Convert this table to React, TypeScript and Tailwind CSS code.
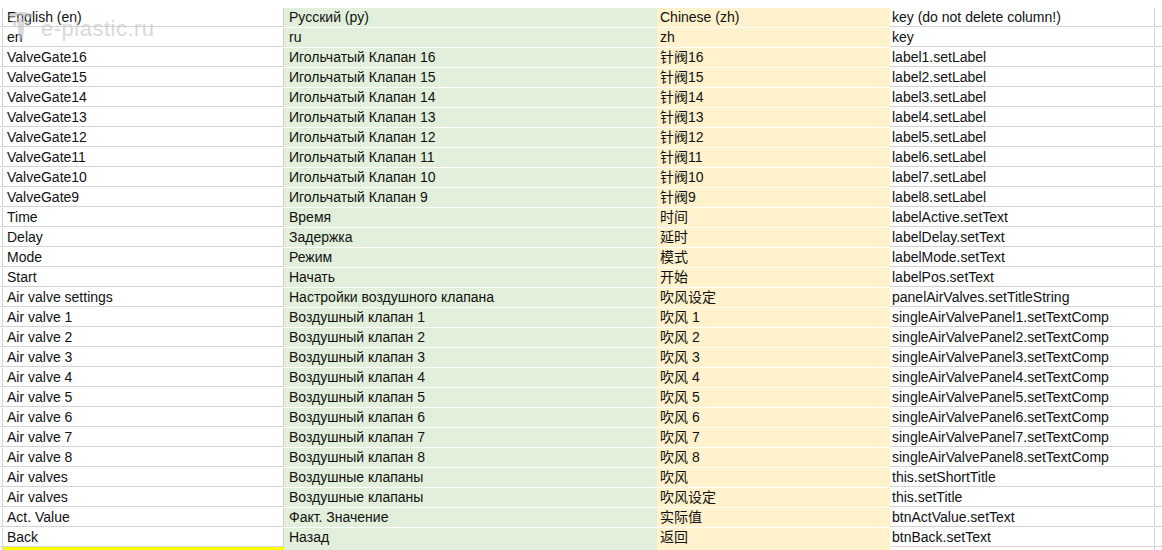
import React from "react";

type Row = [string, string, string, string];

const rows: Row[] = [
  ["en", "ru", "zh", "key"],
  ["ValveGate16", "Игольчатый Клапан 16", "针阀16", "label1.setLabel"],
  ["ValveGate15", "Игольчатый Клапан 15", "针阀15", "label2.setLabel"],
  ["ValveGate14", "Игольчатый Клапан 14", "针阀14", "label3.setLabel"],
  ["ValveGate13", "Игольчатый Клапан 13", "针阀13", "label4.setLabel"],
  ["ValveGate12", "Игольчатый Клапан 12", "针阀12", "label5.setLabel"],
  ["ValveGate11", "Игольчатый Клапан 11", "针阀11", "label6.setLabel"],
  ["ValveGate10", "Игольчатый Клапан 10", "针阀10", "label7.setLabel"],
  ["ValveGate9", "Игольчатый Клапан 9", "针阀9", "label8.setLabel"],
  ["Time", "Время", "时间", "labelActive.setText"],
  ["Delay", "Задержка", "延时", "labelDelay.setText"],
  ["Mode", "Режим", "模式", "labelMode.setText"],
  ["Start", "Начать", "开始", "labelPos.setText"],
  ["Air valve settings", "Настройки воздушного клапана", "吹风设定", "panelAirValves.setTitleString"],
  ["Air valve 1", "Воздушный клапан 1", "吹风 1", "singleAirValvePanel1.setTextComp"],
  ["Air valve 2", "Воздушный клапан 2", "吹风 2", "singleAirValvePanel2.setTextComp"],
  ["Air valve 3", "Воздушный клапан 3", "吹风 3", "singleAirValvePanel3.setTextComp"],
  ["Air valve 4", "Воздушный клапан 4", "吹风 4", "singleAirValvePanel4.setTextComp"],
  ["Air valve 5", "Воздушный клапан 5", "吹风 5", "singleAirValvePanel5.setTextComp"],
  ["Air valve 6", "Воздушный клапан 6", "吹风 6", "singleAirValvePanel6.setTextComp"],
  ["Air valve 7", "Воздушный клапан 7", "吹风 7", "singleAirValvePanel7.setTextComp"],
  ["Air valve 8", "Воздушный клапан 8", "吹风 8", "singleAirValvePanel8.setTextComp"],
  ["Air valves", "Воздушные клапаны", "吹风", "this.setShortTitle"],
  ["Air valves", "Воздушные клапаны", "吹风设定", "this.setTitle"],
  ["Act. Value", "Факт. Значение", "实际值", "btnActValue.setText"],
  ["Back", "Назад", "返回", "btnBack.setText"],
];

const font = {
  fontFamily: '"Liberation Sans", "Noto Sans CJK SC", sans-serif',
};

function SheetRow({ cells, header }: { cells: Row; header?: boolean }) {
  const h = header ? "h-[27px] pt-[8px]" : "h-[20px] pt-[1px]";
  return (
    <div className={`flex ${h} text-[14px] leading-[19px] text-[#111]`}>
      <div className="w-[3px] shrink-0 border-r border-b border-[#d4d4d4]" />
      <div className="w-[281px] shrink-0 border-r border-b border-[#d4d4d4] pl-[4px] truncate">
        {cells[0]}
      </div>
      <div className="w-[373px] shrink-0 bg-[#e2efda] pl-[5px] truncate">{cells[1]}</div>
      <div className="w-[233px] shrink-0 bg-[#fff2cc] pl-[3px] truncate">{cells[2]}</div>
      <div className="w-[265px] shrink-0 border-r border-b border-[#d4d4d4] pl-[2px] truncate">
        {cells[3]}
      </div>
      <div className="flex-1 border-b border-[#d4d4d4]" />
    </div>
  );
}

function Watermark() {
  return (
    <div className="pointer-events-none absolute left-[4px] top-[9px] flex items-end gap-[3px] opacity-60">
      <svg width="34" height="32" viewBox="0 0 34 32" fill="none">
        <path d="M4 6 C10 2 24 2 30 6 L27 9 C22 7 12 7 7 9 Z" fill="#bdbdbd" />
        <path d="M13 9 L21 9 L19 30 L15 30 Z" fill="#c4c4c4" />
        <path d="M8 12 L13 12 L12 17 L9 17 Z" fill="#cccccc" />
        <path d="M21 12 L26 12 L25 17 L22 17 Z" fill="#cccccc" />
      </svg>
      <span
        className="text-[22px] leading-[24px] text-[#c2c2c2] tracking-[0.5px]"
        style={{ fontFamily: '"Liberation Sans", sans-serif' }}
      >
        e-plastic.ru
      </span>
    </div>
  );
}

export default function App() {
  return (
    <div className="relative h-[550px] w-[1162px] overflow-hidden bg-white" style={font}>
      <SheetRow cells={["English (en)", "Русский (ру)", "Chinese (zh)", "key (do not delete column!)"]} header />
      {rows.map((r, i) => (
        <SheetRow key={i} cells={r} />
      ))}
      <div className="flex h-[3px]">
        <div className="w-[3px] shrink-0 border-r border-[#d4d4d4]" />
        <div className="w-[281px] shrink-0 bg-[#ffff00]" />
        <div className="w-[373px] shrink-0 bg-[#e2efda]" />
        <div className="w-[233px] shrink-0 bg-[#fff2cc]" />
        <div className="w-[265px] shrink-0 border-r border-[#d4d4d4]" />
      </div>
      <Watermark />
    </div>
  );
}
